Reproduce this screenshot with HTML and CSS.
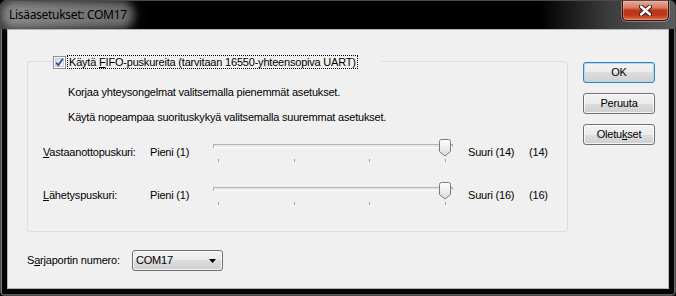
FILE: index.html
```html
<!DOCTYPE html>
<html lang="fi">
<head>
    <meta charset="UTF-8">
    <title>Lisäasetukset: COM17</title>
    <link rel="stylesheet" href="styles.css">
</head>
<body>

<div class="window">
    <div class="titlebar">
        <span class="title">Lisäasetukset: COM17</span>
        <button class="close" title="Sulje">
            <svg width="13" height="11" viewBox="0 0 13 11">
                <path d="M2 1.5 L11 9.5 M11 1.5 L2 9.5" stroke="#3b1a14" stroke-width="4.6" stroke-linecap="round"/>
                <path d="M2 1.5 L11 9.5 M11 1.5 L2 9.5" stroke="#fff" stroke-width="2.4" stroke-linecap="round"/>
            </svg>
        </button>
    </div>

    <div class="client">
        <div class="main">
            <div class="group">
                <div class="legend">
                    <span class="check">
                        <svg width="13" height="13" viewBox="0 0 13 13">
                            <defs>
                                <linearGradient id="cb" x1="0" y1="0" x2="1" y2="1">
                                    <stop offset="0" stop-color="#d9dcdf"/>
                                    <stop offset="1" stop-color="#f8f8f8"/>
                                </linearGradient>
                            </defs>
                            <rect x="0.5" y="0.5" width="12" height="12" fill="#fff" stroke="#8e8f8f"/>
                            <rect x="2.5" y="2.5" width="8" height="8" fill="url(#cb)" stroke="#b0b4b8" stroke-width="0.6"/>
                            <path d="M3.2 6.6 L5.3 9.2 L9.8 2.8" fill="none" stroke="#2d4ea3" stroke-width="1.8"/>
                        </svg>
                    </span>
                    <span class="focus">Käytä <u>F</u>IFO-puskureita (tarvitaan 16550-yhteensopiva UART)</span>
                </div>

                <p class="hint first">Korjaa yhteysongelmat valitsemalla pienemmät asetukset.</p>
                <p class="hint">Käytä nopeampaa suorituskykyä valitsemalla suuremmat asetukset.</p>

                <div class="slider-row">
                    <span class="cell"><u>V</u>astaanottopuskuri:</span>
                    <span class="cell">Pieni (1)</span>
                    <svg class="slider" width="242" height="26" viewBox="0 0 242 26">
                        <defs>
                            <linearGradient id="th1" x1="0" y1="0" x2="0" y2="1">
                                <stop offset="0" stop-color="#ffffff"/>
                                <stop offset="1" stop-color="#dcdcdc"/>
                            </linearGradient>
                        </defs>
                        <rect x="0.5" y="6.5" width="239" height="3" fill="#e7eaea" stroke="#b4b4b4"/>
                        <line x1="1" y1="9.5" x2="240" y2="9.5" stroke="#fff"/>
                        <g stroke="#a7a7a7">
                            <line x1="5.5" y1="21" x2="5.5" y2="24"/>
                            <line x1="81.5" y1="21" x2="81.5" y2="24"/>
                            <line x1="156.5" y1="21" x2="156.5" y2="24"/>
                            <line x1="232.5" y1="21" x2="232.5" y2="24"/>
                        </g>
                        <path d="M226.5 3.5 q0 -2 2 -2 h7 q2 0 2 2 v10 l-5.5 4.5 l-5.5 -4.5 z" fill="url(#th1)" stroke="#7b7b7b"/>
                    </svg>
                    <span class="cell">Suuri (14)</span>
                    <span class="cell">(14)</span>
                </div>

                <div class="slider-row">
                    <span class="cell"><u>L</u>ähetyspuskuri:</span>
                    <span class="cell">Pieni (1)</span>
                    <svg class="slider" width="242" height="26" viewBox="0 0 242 26">
                        <rect x="0.5" y="6.5" width="239" height="3" fill="#e7eaea" stroke="#b4b4b4"/>
                        <line x1="1" y1="9.5" x2="240" y2="9.5" stroke="#fff"/>
                        <g stroke="#a7a7a7">
                            <line x1="5.5" y1="21" x2="5.5" y2="24"/>
                            <line x1="81.5" y1="21" x2="81.5" y2="24"/>
                            <line x1="156.5" y1="21" x2="156.5" y2="24"/>
                            <line x1="232.5" y1="21" x2="232.5" y2="24"/>
                        </g>
                        <path d="M226.5 3.5 q0 -2 2 -2 h7 q2 0 2 2 v10 l-5.5 4.5 l-5.5 -4.5 z" fill="url(#th1)" stroke="#7b7b7b"/>
                    </svg>
                    <span class="cell">Suuri (16)</span>
                    <span class="cell">(16)</span>
                </div>
            </div>

            <div class="port-row">
                <span class="port-label">S<u>a</u>rjaportin numero:</span>
                <div class="combo">
                    <span>COM17</span>
                    <svg width="7" height="4" viewBox="0 0 7 4"><path d="M0 0 H7 L3.5 4 z" fill="#000"/></svg>
                </div>
            </div>
        </div>

        <div class="buttons">
            <button class="btn default">OK</button>
            <button class="btn">Peruuta</button>
            <button class="btn">Oletu<u>k</u>set</button>
        </div>
    </div>
</div>

</body>
</html>
```

FILE: styles.css
```css
* {
    margin: 0;
    padding: 0;
    box-sizing: border-box;
}

body {
    background: #000;
    font-family: "Liberation Sans", Arial, sans-serif;
    font-size: 11px;
    line-height: 13px;
    letter-spacing: -0.2px;
    color: #000;
}

u {
    text-underline-offset: 1px;
}

.window {
    width: 676px;
    height: 296px;
    border: 1px solid #4a4a4a;
    border-radius: 6px 6px 4px 4px;
    background: #050505;
    box-shadow: inset 1px 0 0 #7a7a7a, inset -1px 0 0 #6a6a6a, inset 0 -1px 0 #5a5a5a;
    display: flex;
    flex-direction: column;
    overflow: hidden;
}

/* title bar */
.titlebar {
    height: 28px;
    display: flex;
    justify-content: space-between;
    align-items: flex-start;
    background: linear-gradient(to right, #3a3a3a 0, #000 22%, #000 80%, #3c3c3c 90%, #5b5b5b 100%);
}

.title {
    margin: 7px 0 0 8px;
    font-family: "Noto Sans", "Liberation Sans", sans-serif;
    font-size: 12px;
    line-height: 14px;
    letter-spacing: -0.3px;
    color: #000;
    background: rgba(255, 255, 255, 0.4);
    box-shadow: 0 0 9px 7px rgba(255, 255, 255, 0.4);
    border-radius: 6px;
}

.close {
    width: 47px;
    height: 20px;
    margin-right: 6px;
    border: 1px solid #3d0f08;
    border-top: none;
    border-radius: 0 0 5px 5px;
    background: linear-gradient(#e9aa9a 0, #d67a63 35%, #bd3517 50%, #c0381b 75%, #dc7356 100%);
    box-shadow: 0 0 0 1px rgba(255, 255, 255, 0.3), inset 0 0 0 1px rgba(255, 200, 180, 0.35);
    display: flex;
    align-items: center;
    justify-content: center;
}

/* client area */
.client {
    flex: 1;
    margin: 0 6px 6px;
    border: 1px solid #b5b5b5;
    background: #f0f0f0;
    display: flex;
}

.main {
    padding: 31px 0 0 19px;
}

.group {
    width: 541px;
    border: 1px solid #d5dfe5;
    border-radius: 3px;
    padding-bottom: 7px;
}

.legend {
    display: flex;
    align-items: center;
    width: 330px;
    height: 14px;
    margin: -7px 0 0 24px;
    padding-left: 1px;
    background: #f0f0f0;
}

.check {
    display: flex;
    width: 13px;
    height: 13px;
}

.focus {
    margin-left: 1px;
    padding: 0 1px 0 1px;
    border: 1px dotted #000;
    line-height: 12px;
    white-space: nowrap;
}

.hint {
    padding-left: 40px;
    margin-top: 12px;
}

.hint.first {
    margin-top: 17px;
}

.slider-row {
    display: grid;
    grid-template-columns: 107px 63px 255px 61px auto;
    height: 43px;
    padding-left: 15px;
}

.hint + .slider-row {
    margin-top: 14px;
}

.cell {
    padding-top: 8px;
    white-space: nowrap;
}

.slider {
    display: block;
}

/* port selector */
.port-row {
    display: flex;
    align-items: center;
    margin-top: 18px;
}

.port-label {
    width: 105px;
}

.combo {
    width: 91px;
    height: 21px;
    border: 1px solid #707070;
    border-radius: 3px;
    background: linear-gradient(#f2f2f2 0, #ebebeb 50%, #dddddd 50%, #cfcfcf 100%);
    box-shadow: inset 0 0 0 1px rgba(255, 255, 255, 0.7);
    display: flex;
    align-items: center;
    justify-content: space-between;
    padding: 0 6px 0 3px;
}

/* buttons */
.buttons {
    display: flex;
    flex-direction: column;
    gap: 10px;
    padding: 32px 0 0 15px;
}

.btn {
    width: 72px;
    height: 21px;
    border: 1px solid #707070;
    border-radius: 3px;
    background: linear-gradient(#f2f2f2 0, #ebebeb 50%, #dddddd 50%, #cfcfcf 100%);
    box-shadow: inset 0 0 0 1px rgba(255, 255, 255, 0.75);
    font-family: inherit;
    font-size: 11px;
    line-height: 13px;
    letter-spacing: inherit;
    color: #000;
}

.btn.default {
    border-color: #3c7fb1;
    box-shadow: inset 0 0 0 1px #a6dcf5;
}
```
